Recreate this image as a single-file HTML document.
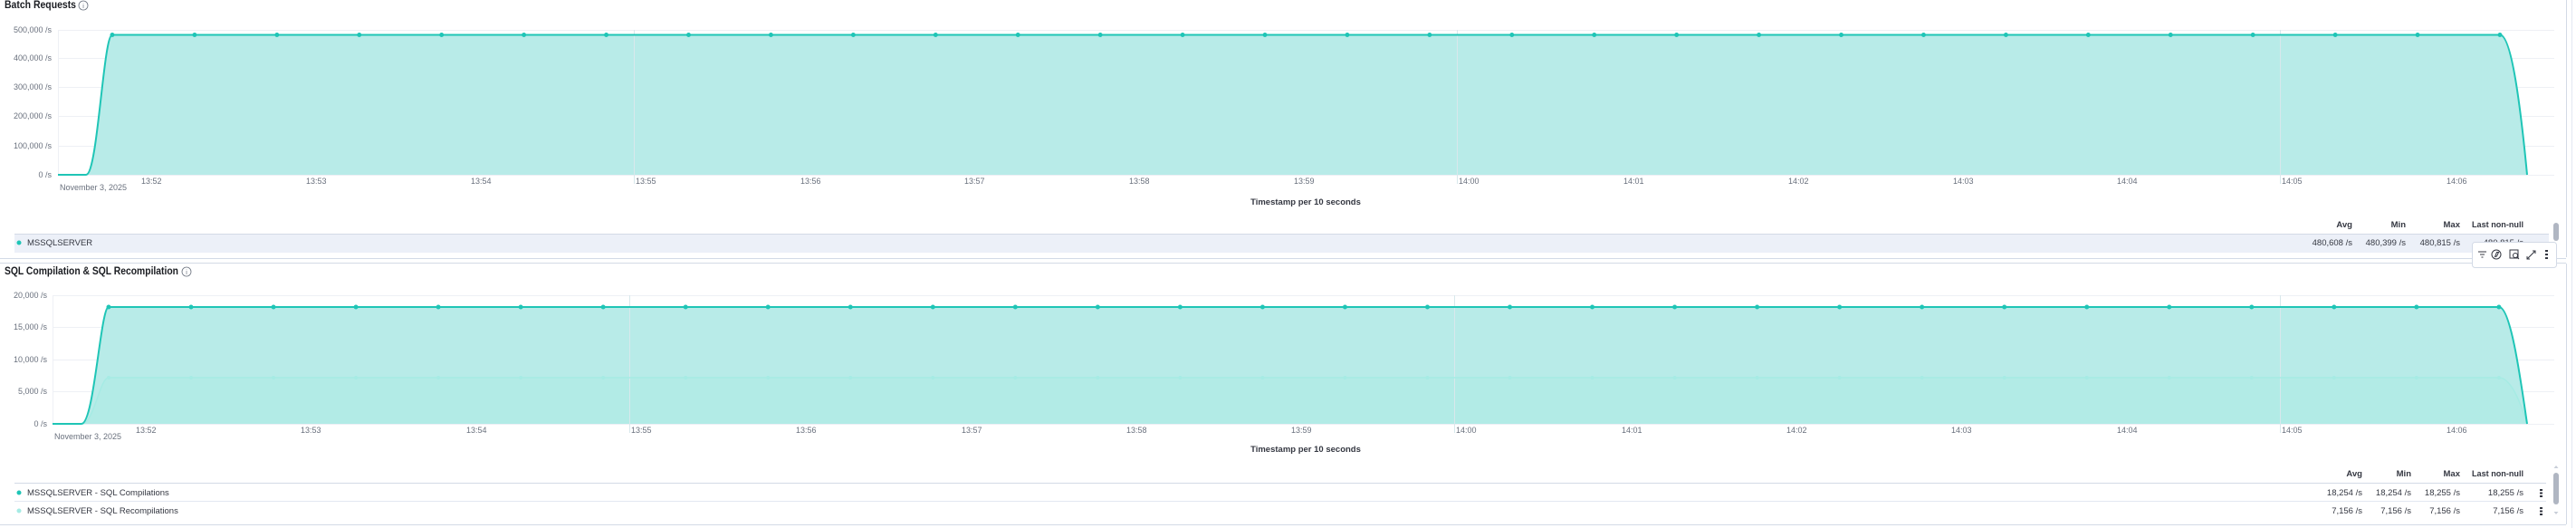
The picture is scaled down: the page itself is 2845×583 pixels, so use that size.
<!DOCTYPE html>
<html><head><meta charset="utf-8"><style>
html,body{margin:0;padding:0;background:#fff;width:2845px;height:583px;overflow:hidden}
svg{display:block;font-family:"Liberation Sans",sans-serif}
.y{font-size:9px;fill:#69707d;text-anchor:end}
.t{font-size:9px;fill:#69707d}
.h{font-size:9.5px;fill:#343741;font-weight:bold;text-anchor:end}
.v{font-size:9.5px;fill:#343741;text-anchor:end}
.l{font-size:9.5px;fill:#343741}
.ti{font-size:11.5px;fill:#1a1c21;font-weight:bold}
.g{stroke:#eef0f5;stroke-width:1}
.vg{stroke:#d8e8ec;stroke-width:1}
</style></head><body>
<svg width="2845" height="583" viewBox="0 0 2845 583">
<line x1="2834.5" y1="0" x2="2834.5" y2="284" stroke="#d3dae6"/>
<line x1="2840.5" y1="0" x2="2840.5" y2="583" stroke="#e3e8f2"/>
<line x1="2834.5" y1="291" x2="2834.5" y2="579" stroke="#d3dae6"/>
<line x1="0" y1="285.5" x2="2834" y2="285.5" stroke="#d3dae6"/>
<line x1="0" y1="290.5" x2="2834" y2="290.5" stroke="#d3dae6"/>
<line x1="0" y1="579.5" x2="2834" y2="579.5" stroke="#d3dae6"/>

<!-- ===== Chart 1 ===== -->
<text x="5" y="9" class="ti" textLength="79" lengthAdjust="spacingAndGlyphs">Batch Requests</text>
<circle cx="92" cy="6" r="5" fill="none" stroke="#69707d" stroke-width="0.8"/>
<text x="92" y="9" font-size="7" fill="#69707d" text-anchor="middle">i</text>

<g class="g">
<line x1="64" y1="33.5" x2="2821" y2="33.5"/><line x1="64" y1="64.5" x2="2821" y2="64.5"/>
<line x1="64" y1="96.5" x2="2821" y2="96.5"/><line x1="64" y1="128.5" x2="2821" y2="128.5"/>
<line x1="64" y1="161.5" x2="2821" y2="161.5"/><line x1="64" y1="193.5" x2="2821" y2="193.5"/>
<line x1="64.5" y1="33" x2="64.5" y2="193"/>
</g>
<text class="y" x="57" y="36">500,000 /s</text>
<text class="y" x="57" y="67">400,000 /s</text>
<text class="y" x="57" y="99">300,000 /s</text>
<text class="y" x="57" y="131">200,000 /s</text>
<text class="y" x="57" y="164">100,000 /s</text>
<text class="y" x="57" y="196">0 /s</text>

<path d="M64,193 L95,193 C108,193 114,38.5 124,38.5 L2761,38.5 C2774,38.5 2784,120 2791,193 Z" fill="#b8ebe8"/>
<g class="vg"><line x1="700.5" y1="33" x2="700.5" y2="203"/><line x1="1609.5" y1="33" x2="1609.5" y2="203"/><line x1="2518.5" y1="33" x2="2518.5" y2="203"/></g>
<path d="M64,193 L95,193 C108,193 114,38.5 124,38.5 L2761,38.5 C2774,38.5 2784,120 2791,193" fill="none" stroke="#1fc5b6" stroke-width="2"/>
<line x1="124" y1="38.5" x2="2765" y2="38.5" stroke="#1fc5b6" stroke-width="5" stroke-linecap="round" stroke-dasharray="0 90.93"/>

<g class="t">
<text x="156" y="203">13:52</text><text x="338" y="203">13:53</text><text x="520" y="203">13:54</text>
<text x="702" y="203">13:55</text><text x="884" y="203">13:56</text><text x="1065" y="203">13:57</text>
<text x="1247" y="203">13:58</text><text x="1429" y="203">13:59</text><text x="1611" y="203">14:00</text>
<text x="1793" y="203">14:01</text><text x="1975" y="203">14:02</text><text x="2157" y="203">14:03</text>
<text x="2338" y="203">14:04</text><text x="2520" y="203">14:05</text><text x="2702" y="203">14:06</text>
<text x="66" y="210">November 3, 2025</text>
</g>
<text x="1442" y="226" font-size="9.5" font-weight="bold" fill="#343741" text-anchor="middle">Timestamp per 10 seconds</text>

<text class="h" x="2598" y="251">Avg</text><text class="h" x="2657" y="251">Min</text>
<text class="h" x="2717" y="251">Max</text><text class="h" x="2787" y="251" textLength="57" lengthAdjust="spacingAndGlyphs">Last non-null</text>
<rect x="16" y="258" width="2799" height="21" fill="#ecf0f8"/>
<line x1="16" y1="258.5" x2="2815" y2="258.5" stroke="#d3dae6"/>
<circle cx="21" cy="268" r="2.5" fill="#1fc5b6"/>
<text class="l" x="30" y="271">MSSQLSERVER</text>
<text class="v" x="2598" y="271">480,608 /s</text><text class="v" x="2657" y="271">480,399 /s</text>
<text class="v" x="2717" y="271">480,815 /s</text><text class="v" x="2787" y="271">480,815 /s</text>
<rect x="2820" y="246" width="6" height="20" rx="3" fill="#b0b6c2"/>
<rect x="2730.5" y="267.5" width="93" height="28" rx="3" fill="#fff" stroke="#d3dae6"/>
<g stroke="#343741" fill="none" stroke-width="1">
<path d="M2737,278h9M2739,281h5M2740.5,284h2"/>
<circle cx="2757" cy="281" r="5"/><path d="M2759.5,278.5l-2,4.5l-2,0.5l2-5z"/>
<rect x="2772" y="276" width="9" height="9"/><circle cx="2778" cy="282" r="2.5"/><path d="M2780,284l2,2"/>
<path d="M2791,286l9-9M2797,277h3v3M2791,283v3h3"/>
</g>
<g fill="#343741"><rect x="2811" y="276" width="3" height="2"/><rect x="2811" y="280" width="3" height="2"/><rect x="2811" y="284" width="3" height="2"/></g>

<!-- ===== Chart 2 ===== -->
<text x="5" y="303" class="ti" textLength="192" lengthAdjust="spacingAndGlyphs">SQL Compilation &amp; SQL Recompilation</text>
<circle cx="206" cy="300" r="5" fill="none" stroke="#69707d" stroke-width="0.8"/>
<text x="206" y="303" font-size="7" fill="#69707d" text-anchor="middle">i</text>

<g class="g">
<line x1="58" y1="326.5" x2="2821" y2="326.5"/><line x1="58" y1="361.5" x2="2821" y2="361.5"/>
<line x1="58" y1="397.5" x2="2821" y2="397.5"/><line x1="58" y1="432.5" x2="2821" y2="432.5"/>
<line x1="58" y1="468.5" x2="2821" y2="468.5"/><line x1="58.5" y1="326" x2="58.5" y2="468"/>
</g>
<text class="y" x="52" y="329">20,000 /s</text>
<text class="y" x="52" y="364">15,000 /s</text>
<text class="y" x="52" y="400">10,000 /s</text>
<text class="y" x="52" y="435">5,000 /s</text>
<text class="y" x="52" y="471">0 /s</text>

<path d="M58,468 L90,468 C104,468 111,339 120,339 L2760,339 C2773,339 2784,420 2791,468 Z" fill="#b8ebe8"/>
<path d="M58,468 L90,468 C104,468 110,417 120,417 L2760,417 C2773,417 2784,445 2791,468 Z" fill="#b2ebe6"/>
<g class="vg"><line x1="695.5" y1="326" x2="695.5" y2="478"/><line x1="1606.5" y1="326" x2="1606.5" y2="478"/><line x1="2518.5" y1="326" x2="2518.5" y2="478"/></g>
<path d="M58,468 L90,468 C104,468 110,417 120,417 L2760,417 C2773,417 2784,445 2791,468" fill="none" stroke="#a6ebe4" stroke-width="1.5"/>
<line x1="120" y1="417" x2="2764" y2="417" stroke="#a6ebe4" stroke-width="4" stroke-linecap="round" stroke-dasharray="0 91.03"/>
<path d="M58,468 L90,468 C104,468 111,339 120,339 L2760,339 C2773,339 2784,420 2791,468" fill="none" stroke="#1fc5b6" stroke-width="2"/>
<line x1="120" y1="339" x2="2764" y2="339" stroke="#1fc5b6" stroke-width="5" stroke-linecap="round" stroke-dasharray="0 91.03"/>

<g class="t">
<text x="150" y="478">13:52</text><text x="332" y="478">13:53</text><text x="515" y="478">13:54</text>
<text x="697" y="478">13:55</text><text x="879" y="478">13:56</text><text x="1062" y="478">13:57</text>
<text x="1244" y="478">13:58</text><text x="1426" y="478">13:59</text><text x="1608" y="478">14:00</text>
<text x="1791" y="478">14:01</text><text x="1973" y="478">14:02</text><text x="2155" y="478">14:03</text>
<text x="2338" y="478">14:04</text><text x="2520" y="478">14:05</text><text x="2702" y="478">14:06</text>
<text x="60" y="485">November 3, 2025</text>
</g>
<text x="1442" y="499" font-size="9.5" font-weight="bold" fill="#343741" text-anchor="middle">Timestamp per 10 seconds</text>

<text class="h" x="2609" y="526">Avg</text><text class="h" x="2663" y="526">Min</text>
<text class="h" x="2717" y="526">Max</text><text class="h" x="2787" y="526" textLength="57" lengthAdjust="spacingAndGlyphs">Last non-null</text>
<line x1="16" y1="533.5" x2="2812" y2="533.5" stroke="#d3dae6"/>
<line x1="16" y1="553.5" x2="2812" y2="553.5" stroke="#e3e8f2"/>
<circle cx="21" cy="544" r="2.5" fill="#1fc5b6"/>
<text class="l" x="30" y="547">MSSQLSERVER - SQL Compilations</text>
<circle cx="21" cy="564" r="2.5" fill="#a6ebe4"/>
<text class="l" x="30" y="567">MSSQLSERVER - SQL Recompilations</text>
<text class="v" x="2609" y="547">18,254 /s</text><text class="v" x="2663" y="547">18,254 /s</text>
<text class="v" x="2717" y="547">18,255 /s</text><text class="v" x="2787" y="547">18,255 /s</text>
<text class="v" x="2609" y="567">7,156 /s</text><text class="v" x="2663" y="567">7,156 /s</text>
<text class="v" x="2717" y="567">7,156 /s</text><text class="v" x="2787" y="567">7,156 /s</text>
<g fill="#343741"><rect x="2805" y="540" width="3" height="2"/><rect x="2805" y="543.5" width="3" height="2"/><rect x="2805" y="547" width="3" height="2"/>
<rect x="2805" y="560" width="3" height="2"/><rect x="2805" y="563.5" width="3" height="2"/><rect x="2805" y="567" width="3" height="2"/></g>
<rect x="2820" y="522" width="6" height="35" rx="3" fill="#b0b6c2"/>
<path d="M2820.5,517l2.5,-3l2.5,3z M2820.5,565l2.5,3l2.5,-3z" fill="#c8ced8"/>
</svg>
</body></html>
